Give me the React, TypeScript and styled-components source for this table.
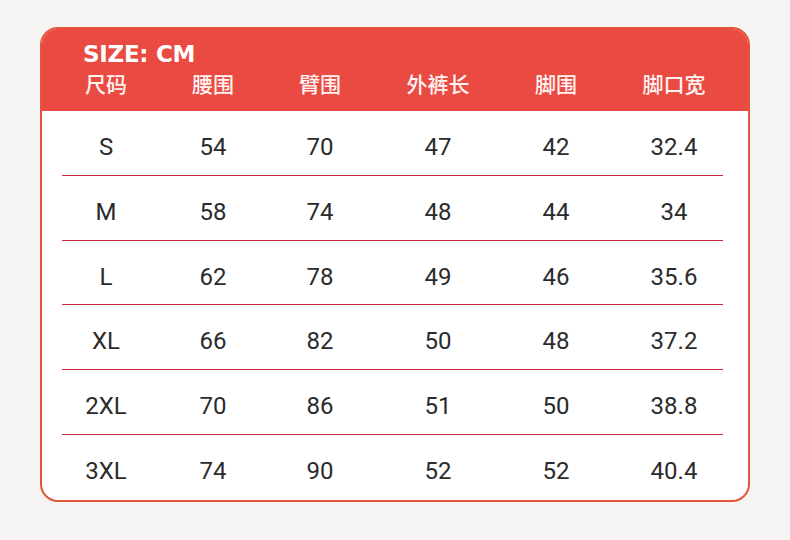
import React from "react";
import styled, { createGlobalStyle } from "styled-components";

const Global = createGlobalStyle`
  html, body { margin: 0; padding: 0; background: #f6f4f2; }
  body { font-family: Roboto, "Noto Sans CJK SC", sans-serif; }
`;

const Page = styled.div`
  width: 790px;
  height: 540px;
  box-sizing: border-box;
  padding: 27px 0 0 40px;
  background: #f6f4f2;
`;

const Card = styled.div`
  width: 710px;
  height: 475px;
  box-sizing: border-box;
  border: 2px solid #e2553b;
  border-radius: 18px;
  overflow: hidden;
  background: #ffffff;
  display: flex;
  flex-direction: column;
`;

const Header = styled.div`
  background: #e94a42;
  height: 82px;
  box-sizing: border-box;
  padding: 14px 0 0 20px;
  display: flex;
  flex-direction: column;
`;

const Title = styled.div`
  font-family: "DejaVu Sans", sans-serif;
  font-weight: 700;
  font-size: 23px;
  line-height: 22px;
  letter-spacing: -0.3px;
  color: #ffffff;
  padding-left: 21px;
`;

const Grid = styled.div`
  display: grid;
  grid-template-columns: 88px 126px 88px 148px 88px 148px;
  width: 661px;
`;

const HeadRow = styled(Grid)`
  margin-top: 4px;
`;

const HeadCell = styled.div`
  text-align: center;
  font-family: "Noto Sans CJK SC", sans-serif;
  font-weight: 500;
  font-size: 21px;
  line-height: 28px;
  color: #fff4f2;
`;

const Body = styled.div`
  padding: 0 25px 0 20px;
  display: flex;
  flex-direction: column;
`;

const Row = styled(Grid)<{ $last?: boolean }>`
  padding: 22px 0 13.75px;
  border-bottom: ${(p) => (p.$last ? "none" : "1px solid #c72a3c")};
`;

const Cell = styled.div`
  text-align: center;
  font-family: Roboto, sans-serif;
  font-size: 24px;
  line-height: 28px;
  color: #2b2b2b;
`;

const heads = ["尺码", "腰围", "臂围", "外裤长", "脚围", "脚口宽"];
const rows = [
  ["S", "54", "70", "47", "42", "32.4"],
  ["M", "58", "74", "48", "44", "34"],
  ["L", "62", "78", "49", "46", "35.6"],
  ["XL", "66", "82", "50", "48", "37.2"],
  ["2XL", "70", "86", "51", "50", "38.8"],
  ["3XL", "74", "90", "52", "52", "40.4"],
];

export default function App() {
  return (
    <Page>
      <Global />
      <Card>
        <Header>
          <Title>SIZE: CM</Title>
          <HeadRow>
            {heads.map((h) => (
              <HeadCell key={h}>{h}</HeadCell>
            ))}
          </HeadRow>
        </Header>
        <Body>
          {rows.map((r, i) => (
            <Row key={r[0]} $last={i === rows.length - 1}>
              {r.map((c, j) => (
                <Cell key={j}>{c}</Cell>
              ))}
            </Row>
          ))}
        </Body>
      </Card>
    </Page>
  );
}
